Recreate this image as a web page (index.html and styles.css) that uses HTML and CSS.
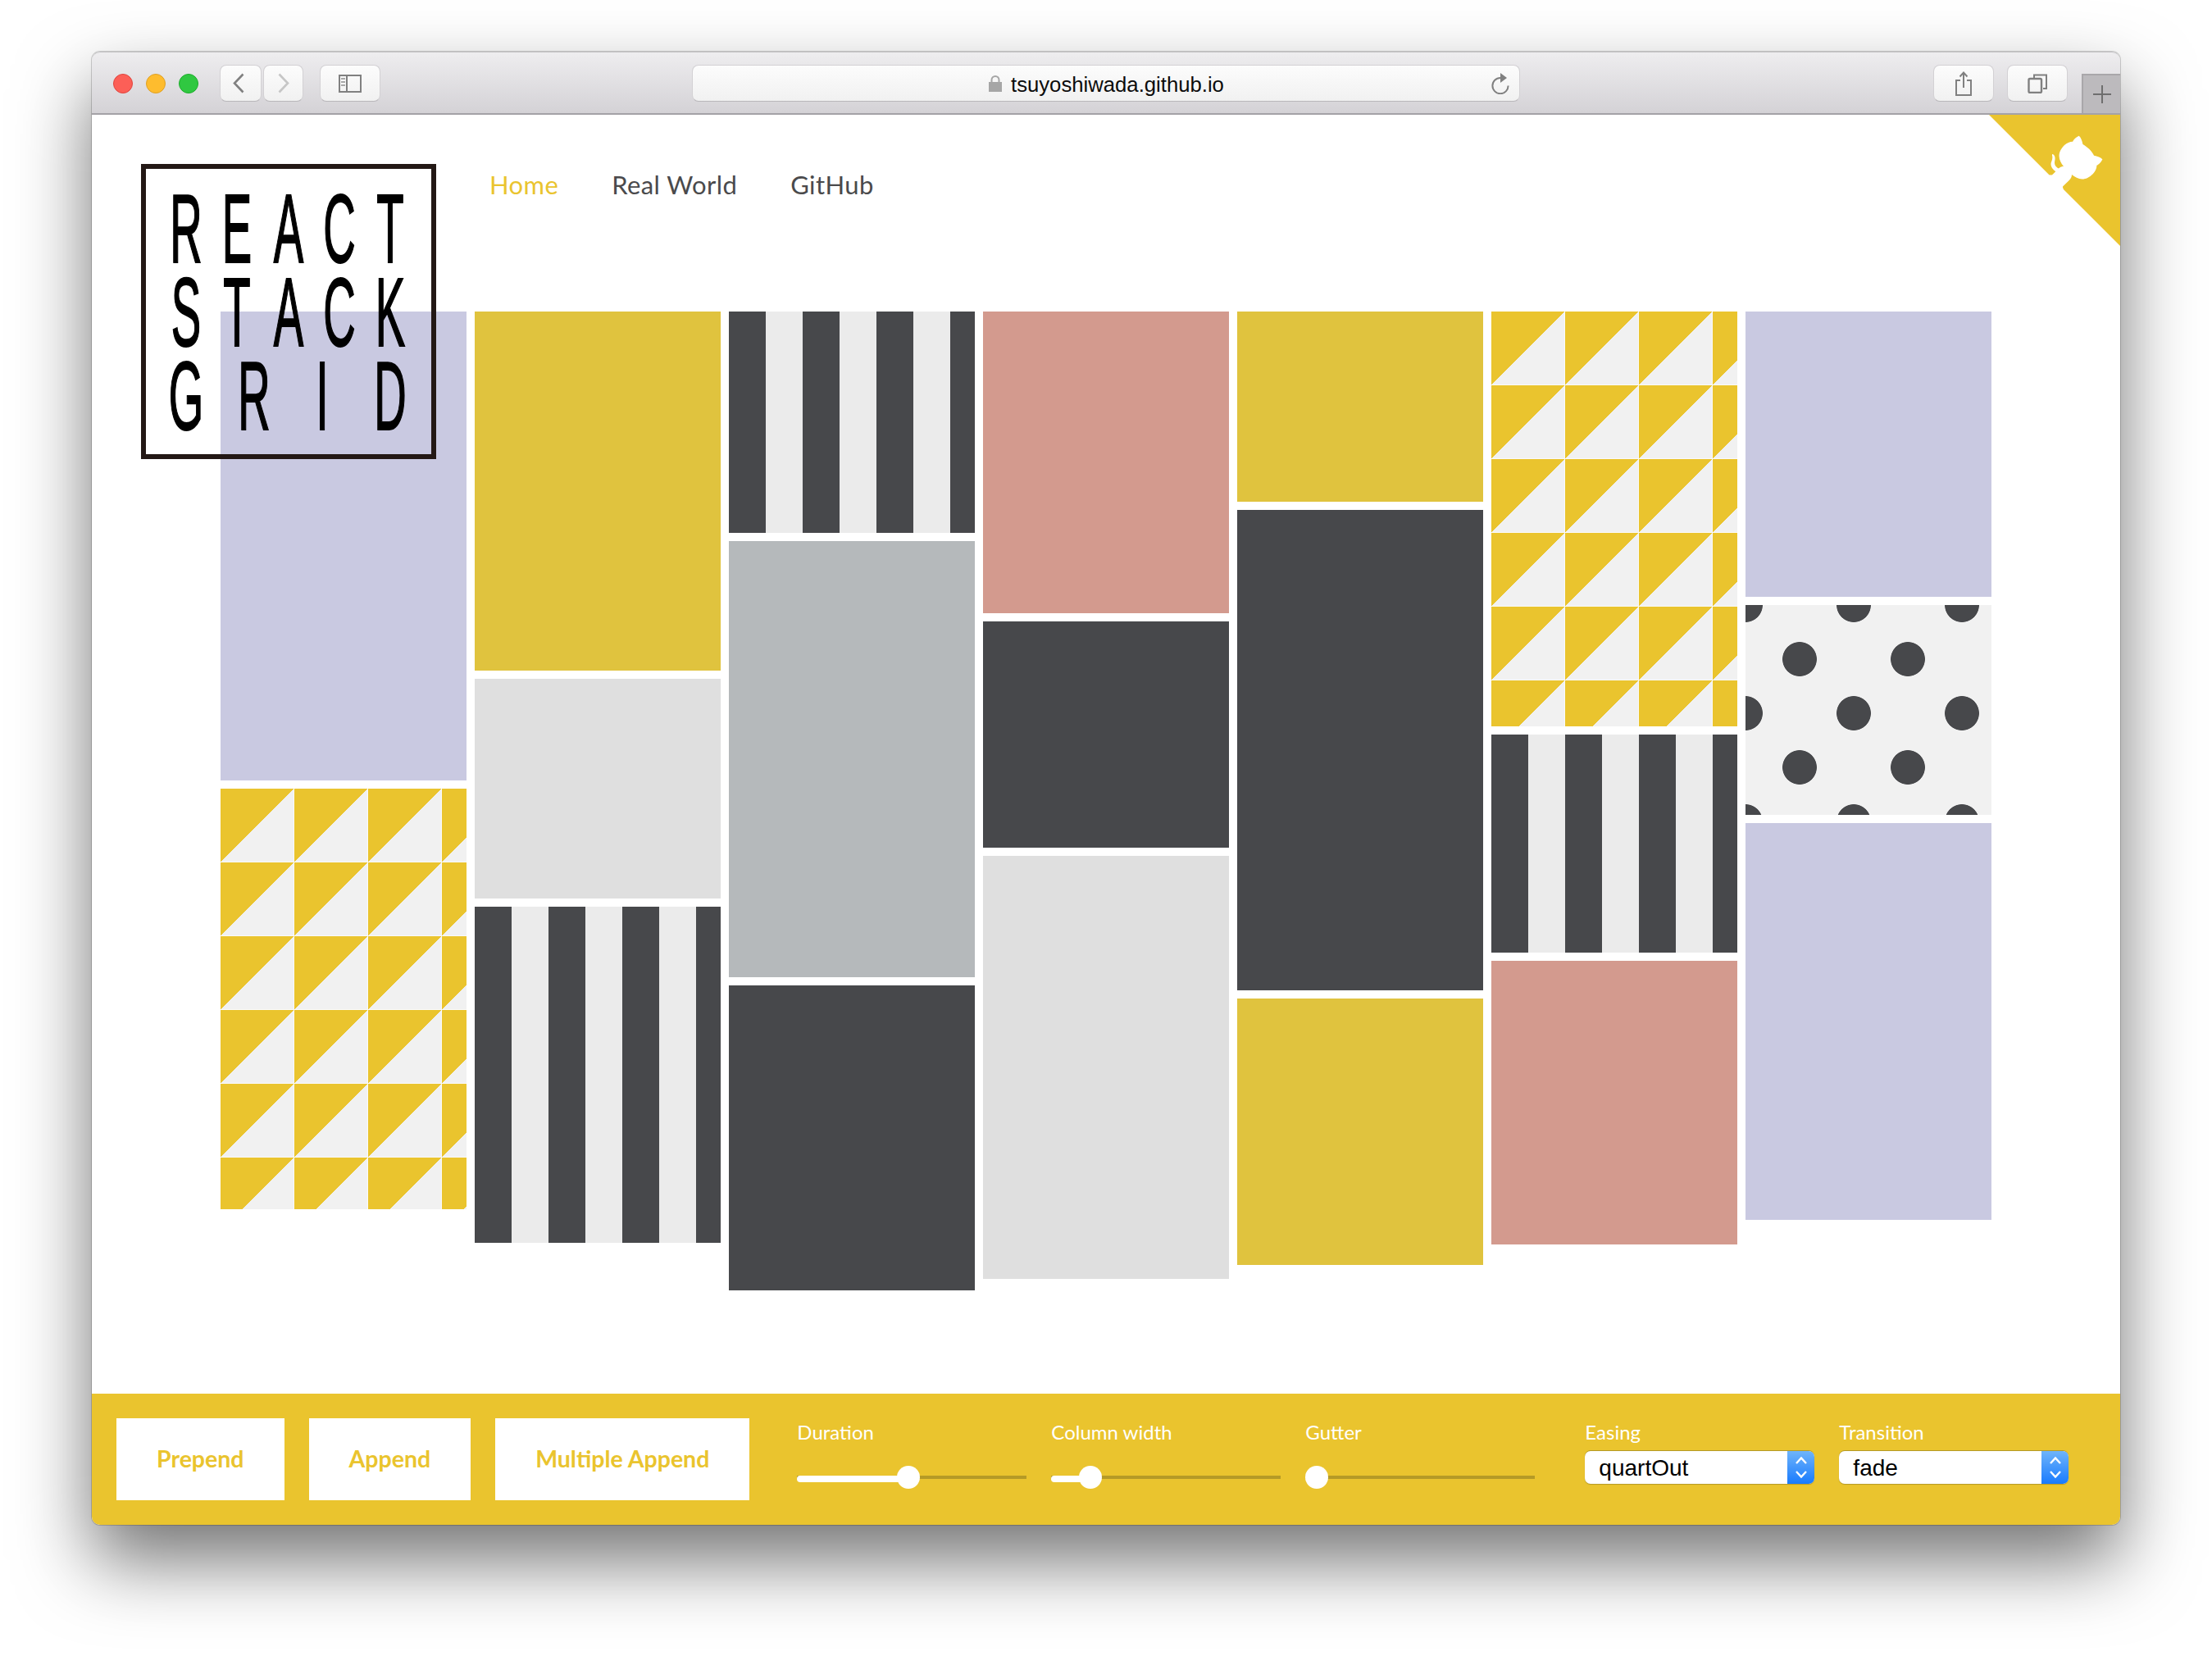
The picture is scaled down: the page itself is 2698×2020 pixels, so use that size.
FILE: index.html
```html
<!DOCTYPE html>
<html lang="en">
<head>
    <meta charset="UTF-8">
    <meta name="viewport" content="width=device-width, initial-scale=1.0">
    <title>React Stack Grid</title>
    <link rel="stylesheet" href="styles.css">
</head>

<body>
    <div class="window">

        <!-- browser toolbar -->
        <div class="toolbar">
            <div class="lights">
                <span class="light red"></span>
                <span class="light yellow"></span>
                <span class="light green"></span>
            </div>
            <div class="tool-btn nav-btn back">
                <svg width="14" height="25" viewBox="0 0 14 25"><path d="M12.5 1.5 L2 12.5 L12.5 23.5" fill="none" stroke="#808080" stroke-width="2.6"/></svg>
            </div>
            <div class="tool-btn nav-btn forward">
                <svg width="14" height="25" viewBox="0 0 14 25"><path d="M1.5 1.5 L12 12.5 L1.5 23.5" fill="none" stroke="#c6c6c6" stroke-width="2.6"/></svg>
            </div>
            <div class="tool-btn sidebar-btn">
                <svg width="28" height="22" viewBox="0 0 28 22">
                    <rect x="1" y="1" width="26" height="20" fill="none" stroke="#808080" stroke-width="2"/>
                    <path d="M10 1 V21" stroke="#808080" stroke-width="2"/>
                    <path d="M3 5 H8 M3 9 H8 M3 13 H8" stroke="#a8a8a8" stroke-width="2"/>
                </svg>
            </div>
            <div class="url-bar">
                <svg class="lock" width="16" height="20" viewBox="0 0 16 20"><path d="M3.5 9 V5.5 a4.5 4.5 0 0 1 9 0 V9" fill="none" stroke="#a6a6a6" stroke-width="2"/><rect x="0" y="8" width="16" height="12" fill="#a6a6a6"/></svg>
                <span class="url-text">tsuyoshiwada.github.io</span>
                <svg class="reload" width="22" height="26" viewBox="0 0 22 26"><path d="M11 6 A9.6 9.6 0 1 0 20.6 15.6" fill="none" stroke="#808080" stroke-width="2"/><path d="M11 0 L19 6 L11 12 Z" fill="#808080"/></svg>
            </div>
            <div class="tool-btn right-btn share-btn">
                <svg width="22" height="30" viewBox="0 0 22 30"><path d="M7 11 H2 V29 H20 V11 H15" fill="none" stroke="#808080" stroke-width="2"/><path d="M11 20 V2 M6.5 6.5 L11 1.5 L15.5 6.5" fill="none" stroke="#808080" stroke-width="2"/></svg>
            </div>
            <div class="tool-btn right-btn tabs-btn">
                <svg width="24" height="24" viewBox="0 0 24 24"><path d="M8 5 V1.5 H23 V18 H19" fill="none" stroke="#808080" stroke-width="2"/><rect x="1.5" y="6" width="15.5" height="17" rx="1.5" fill="none" stroke="#808080" stroke-width="2.4"/></svg>
            </div>
            <div class="new-tab">
                <svg width="24" height="24" viewBox="0 0 24 24"><path d="M12 1 V23 M1 12 H23" stroke="#6e6e6e" stroke-width="2"/></svg>
            </div>
        </div>

        <!-- page -->
        <div class="page">
            <div class="logo">
                <div class="logo-row"><span>R</span><span>E</span><span>A</span><span>C</span><span>T</span></div>
                <div class="logo-row"><span>S</span><span>T</span><span>A</span><span>C</span><span>K</span></div>
                <div class="logo-row"><span>G</span><span>R</span><span>I</span><span>D</span></div>
            </div>

            <nav class="main-nav">
                <a class="active" href="#">Home</a>
                <a href="#">Real World</a>
                <a href="#">GitHub</a>
            </nav>

            <svg class="corner" width="160" height="160" viewBox="0 0 250 250">
                <path d="M0,0 L115,115 L130,115 L142,142 L250,250 L250,0 Z" fill="#eac42e"/>
                <path d="M128.3,109.0 C113.8,99.7 119.0,89.6 119.0,89.6 C122.0,82.7 120.5,78.6 120.5,78.6 C119.2,72.0 123.4,76.3 123.4,76.3 C127.3,80.9 125.5,87.3 125.5,87.3 C122.9,97.6 130.6,101.9 134.4,103.2" fill="#fff"/>
                <path d="M115.0,115.0 C114.9,115.1 118.7,116.5 119.8,115.4 L133.7,101.6 C136.9,99.2 139.9,98.4 142.2,98.6 C133.8,88.0 127.5,74.4 143.8,58.0 C148.5,53.4 154.0,51.2 159.7,51.0 C160.3,49.4 163.2,43.6 171.4,40.1 C171.4,40.1 176.1,42.5 178.8,56.2 C183.1,58.6 187.2,61.8 190.9,65.4 C194.5,69.0 197.7,73.2 200.1,77.6 C213.8,80.2 216.3,84.9 216.3,84.9 C212.7,93.1 206.9,96.0 205.4,96.6 C205.1,102.4 203.0,107.8 198.3,112.5 C181.9,128.9 168.3,122.5 157.7,114.1 C157.9,116.9 156.7,120.9 152.7,124.9 L141.0,136.5 C139.8,137.7 141.6,141.9 141.8,141.8 Z" fill="#fff"/>
            </svg>

            <div class="grid">
                <div class="col">
                    <div class="tile lavender" style="height:572px"></div>
                    <div class="tile triangles" style="height:513px"></div>
                </div>
                <div class="col">
                    <div class="tile mustard" style="height:438px"></div>
                    <div class="tile light-gray" style="height:268px"></div>
                    <div class="tile stripes" style="height:410px"></div>
                </div>
                <div class="col">
                    <div class="tile stripes" style="height:270px"></div>
                    <div class="tile mid-gray" style="height:532px"></div>
                    <div class="tile dark" style="height:372px"></div>
                </div>
                <div class="col">
                    <div class="tile pink" style="height:368px"></div>
                    <div class="tile dark" style="height:276px"></div>
                    <div class="tile light-gray" style="height:516px"></div>
                </div>
                <div class="col">
                    <div class="tile mustard" style="height:232px"></div>
                    <div class="tile dark" style="height:586px"></div>
                    <div class="tile mustard" style="height:325px"></div>
                </div>
                <div class="col">
                    <div class="tile triangles" style="height:506px"></div>
                    <div class="tile stripes" style="height:266px"></div>
                    <div class="tile pink" style="height:346px"></div>
                </div>
                <div class="col">
                    <div class="tile lavender" style="height:348px"></div>
                    <div class="tile dots" style="height:256px"></div>
                    <div class="tile lavender" style="height:484px"></div>
                </div>
            </div>
        </div>

        <!-- controls -->
        <div class="controls">
            <div class="buttons">
                <button type="button">Prepend</button>
                <button type="button">Append</button>
                <button type="button">Multiple Append</button>
            </div>
            <div class="sliders">
                <div class="field">
                    <label>Duration</label>
                    <div class="slider"><div class="slider-fill" style="width:136px"></div><div class="slider-thumb" style="left:122px"></div></div>
                </div>
                <div class="field">
                    <label>Column width</label>
                    <div class="slider"><div class="slider-fill" style="width:48px"></div><div class="slider-thumb" style="left:34px"></div></div>
                </div>
                <div class="field">
                    <label>Gutter</label>
                    <div class="slider"><div class="slider-thumb" style="left:0"></div></div>
                </div>
            </div>
            <div class="selects">
                <div class="field">
                    <label>Easing</label>
                    <div class="select-box"><span>quartOut</span><div class="select-arrows"><svg width="16" height="30" viewBox="0 0 16 30"><path d="M2 10 L8 3.5 L14 10 M2 20 L8 26.5 L14 20" fill="none" stroke="#fff" stroke-width="2.4"/></svg></div></div>
                </div>
                <div class="field">
                    <label>Transition</label>
                    <div class="select-box"><span>fade</span><div class="select-arrows"><svg width="16" height="30" viewBox="0 0 16 30"><path d="M2 10 L8 3.5 L14 10 M2 20 L8 26.5 L14 20" fill="none" stroke="#fff" stroke-width="2.4"/></svg></div></div>
                </div>
            </div>
        </div>
    </div>
</body>
</html>
```

FILE: styles.css
```css
* {
    box-sizing: border-box;
}

html,
body {
    height: 100%;
}

body {
    margin: 0;
    background-color: #fff;
    overflow: hidden;
    font-family: 'Lato', sans-serif;
}

.window {
    display: flex;
    flex-direction: column;
    width: 2474px;
    height: 1797px;
    margin: 63px 0 0 112px;
    border-radius: 10px;
    background-color: #fff;
    box-shadow: 0 0 0 1px rgba(0, 0, 0, 0.18), 0 44px 90px rgba(0, 0, 0, 0.55);
}

/* toolbar */
.toolbar {
    display: flex;
    align-items: center;
    height: 77px;
    padding: 1px 0 0 26px;
    background: linear-gradient(#eeedef, #d4d2d6);
    border-top: 1px solid #c4c3c5;
    border-bottom: 2px solid #a4a2a7;
    border-radius: 10px 10px 0 0;
}

.lights {
    display: flex;
    gap: 16px;
}

.light {
    width: 24px;
    height: 24px;
    border-radius: 50%;
}

.red {
    background-color: #fc5f57;
    border: 1px solid #e0443e;
}

.yellow {
    background-color: #febc2e;
    border: 1px solid #dfa023;
}

.green {
    background-color: #30c841;
    border: 1px solid #1dad2b;
}

.tool-btn {
    display: flex;
    align-items: center;
    justify-content: center;
    height: 45px;
    background: linear-gradient(#fcfcfc, #f1f1f1);
    border: 1px solid #d3d1d4;
    border-bottom-color: #b9b7ba;
    border-radius: 8px;
}

.nav-btn {
    width: 51px;
}

.back {
    margin-left: 26px;
    padding-right: 5px;
}

.forward {
    width: 49px;
    margin-left: 2px;
}

.sidebar-btn {
    width: 74px;
    margin-left: 20px;
}

.url-bar {
    display: flex;
    align-items: center;
    width: 1010px;
    height: 45px;
    margin-left: 380px;
    padding-left: 361px;
    background: linear-gradient(#fcfcfc, #f1f1f1);
    border: 1px solid #d3d1d4;
    border-bottom-color: #b9b7ba;
    border-radius: 8px;
}

.url-text {
    margin: 4px 0 0 11px;
    font-family: 'Liberation Sans', sans-serif;
    font-size: 25.7px;
    color: #0c0c0c;
}

.reload {
    margin-left: auto;
    margin-right: 12px;
}

.right-btn {
    width: 74px;
}

.share-btn {
    margin-left: 504px;
}

.tabs-btn {
    margin-left: 16px;
}

.new-tab {
    display: flex;
    align-items: center;
    justify-content: center;
    align-self: flex-end;
    width: 47px;
    height: 48px;
    margin-left: 17px;
    background-color: #bcbabd;
    border-top: 2px solid #a9a7aa;
    border-left: 2px solid #a9a7aa;
}

/* page */
.page {
    position: relative;
    flex: 1;
    padding-top: 240px;
    overflow: hidden;
}

.logo {
    position: absolute;
    left: 60px;
    top: 60px;
    z-index: 2;
    display: flex;
    flex-direction: column;
    width: 360px;
    height: 360px;
    padding: 55px 32px 0 31px;
    border: 6px solid #231815;
    color: #000;
    font-family: 'Liberation Sans', sans-serif;
    font-size: 60px;
    -webkit-text-stroke: 1px #000;
}

.logo-row {
    display: flex;
    flex: none;
    justify-content: space-between;
    height: 102px;
    line-height: 69px;
}

.logo-row span {
    display: flex;
    justify-content: center;
    width: 36px;
    transform: scale(0.91, 1.98);
}

.main-nav {
    position: absolute;
    left: 485px;
    top: 66px;
    display: flex;
    gap: 65px;
    font-size: 31px;
    letter-spacing: 0.4px;
}

.main-nav a {
    color: #4a4a4c;
    text-decoration: none;
}

.main-nav a.active {
    color: #eac42e;
}

.corner {
    position: absolute;
    right: 0;
    top: 0;
}

.grid {
    display: flex;
    justify-content: center;
    gap: 10px;
}

.col {
    display: flex;
    flex-direction: column;
    gap: 10px;
    width: 300px;
}

.lavender {
    background-color: #c9c9e1;
}

.mustard {
    background-color: #e0c33e;
}

.light-gray {
    background-color: #dfdfdf;
}

.mid-gray {
    background-color: #b5b9bb;
}

.dark {
    background-color: #47484b;
}

.pink {
    background-color: #d39a8e;
}

.stripes {
    background: linear-gradient(to right, #47484b 45px, #ebebeb 45px);
    background-size: 90px 90px;
}

.triangles {
    background:
        linear-gradient(to right, transparent 89px, #fafafa 89px),
        linear-gradient(to bottom, transparent 89px, #fafafa 89px),
        linear-gradient(to bottom right, #eac42e 50%, #f1f1f1 50%);
    background-size: 90px 90px;
}

.dots {
    background-color: #f1f1f1;
    background-image:
        radial-gradient(circle, #47484b 20.5px, transparent 21.3px),
        radial-gradient(circle, #47484b 20.5px, transparent 21.3px);
    background-size: 132px 132px;
    background-position: 0 0, 66px 66px;
}

/* controls */
.controls {
    display: flex;
    height: 160px;
    padding: 30px 0 0 30px;
    background-color: #eac42e;
    border-radius: 0 0 10px 10px;
}

.buttons {
    display: flex;
    gap: 30px;
    height: 100px;
}

button {
    padding: 0 49px 2px;
    background-color: #fff;
    border: none;
    color: #eac42e;
    font-family: 'Lato', sans-serif;
    font-size: 28.5px;
    font-weight: 700;
}

.sliders {
    display: flex;
    flex: none;
    gap: 30px;
    margin-left: 58px;
}

.selects {
    display: flex;
    flex: none;
    gap: 30px;
    margin-left: 61px;
}

.field {
    width: 280px;
}

.field label {
    display: block;
    height: 34px;
    line-height: 34px;
    color: #fff;
    font-size: 24px;
}

.slider {
    position: relative;
    height: 28px;
    margin-top: 24px;
}

.slider::before {
    content: '';
    position: absolute;
    left: 0;
    right: 0;
    top: 12px;
    height: 4px;
    background-color: #b59a26;
}

.slider-fill {
    position: absolute;
    left: 0;
    top: 12px;
    height: 8px;
    background-color: #fff;
    border-radius: 4px 0 0 4px;
}

.slider-thumb {
    position: absolute;
    top: 0;
    width: 28px;
    height: 28px;
    background-color: #fff;
    border-radius: 50%;
}

.select-box {
    display: flex;
    align-items: center;
    justify-content: space-between;
    height: 40px;
    margin-top: 6px;
    padding-left: 17px;
    background-color: #fff;
    border-radius: 7px;
    box-shadow: 0 -1px 0 #b59a26, 0 1px 1px #b59a26;
    color: #000;
    font-family: 'Liberation Sans', sans-serif;
    font-size: 28px;
    overflow: hidden;
}

.select-box span {
    padding-top: 2px;
}

.select-arrows {
    display: flex;
    align-items: center;
    justify-content: center;
    width: 33px;
    height: 100%;
    background: linear-gradient(#6fb4fa, #197bfe);
}
```
